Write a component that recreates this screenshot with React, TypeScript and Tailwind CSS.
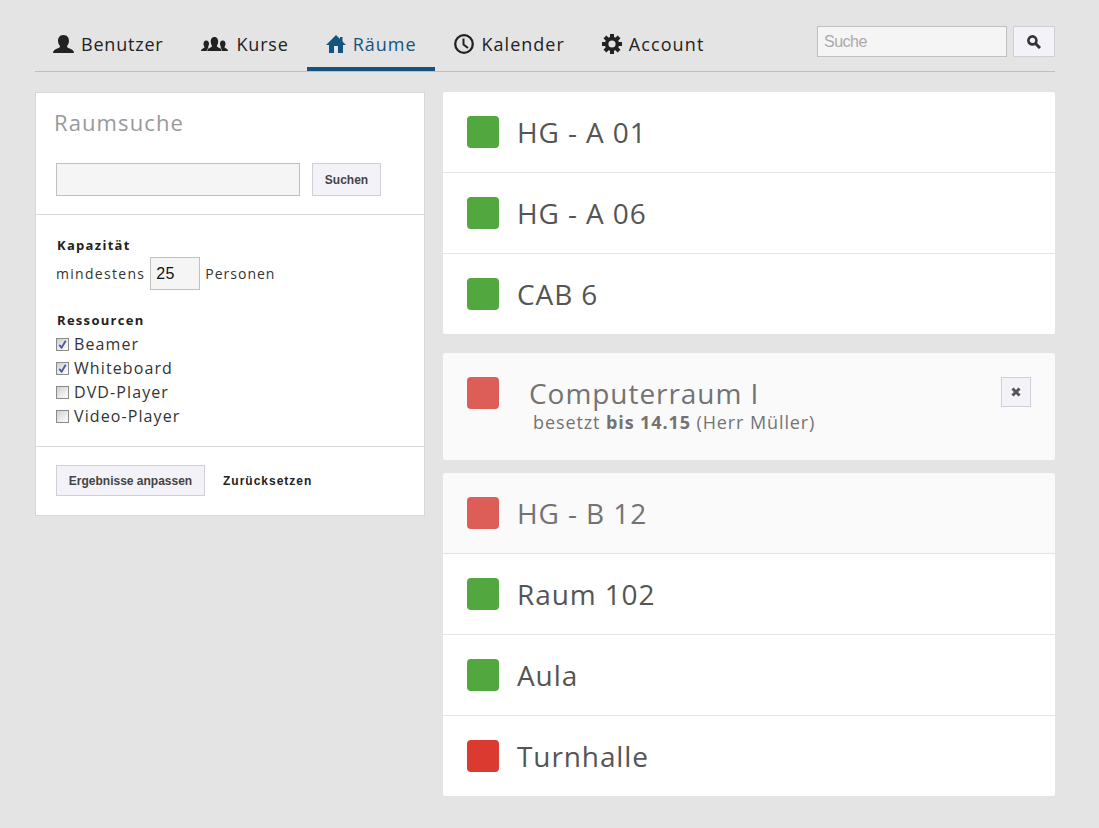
const sans = "font-['Open_Sans',sans-serif]";
const arial = "font-['Liberation_Sans',Arial,sans-serif]";

const bust =
  "M10.5 0C6.5 0 5 3 5 6C5 8.5 6.5 10 7 11.5C7 13 3 13.5 1 15.5C.3 16.2 0 17 0 18H21C21 17 20.7 16.2 20 15.5C18 13.5 14 13 14 11.5C14.5 10 16 8.5 16 6C16 3 14.5 0 10.5 0Z";

function UserIcon() {
  return (
    <svg viewBox="0 0 21 18" className="h-[18px] w-[21px] fill-current">
      <path d={bust} />
    </svg>
  );
}

function GroupIcon() {
  return (
    <svg viewBox="0 0 27 14" className="h-[14px] w-[27px] fill-current">
      <path d={bust} transform="translate(0 3.6) scale(.5 .58)" />
      <path d={bust} transform="translate(16.5 3.6) scale(.5 .58)" />
      <path d={bust} transform="translate(6.3 0) scale(.68 .78)" stroke="#e4e4e4" strokeWidth="1.6" paintOrder="stroke" />
    </svg>
  );
}

function HomeIcon() {
  return (
    <svg viewBox="0 0 20 18" className="h-[18px] w-[20px] fill-current">
      <path d="M10 0L14 4V2H16.5V6.5L20 10H17V18H12V11H8V18H3V10H0Z" />
    </svg>
  );
}

function ClockIcon() {
  return (
    <svg viewBox="0 0 20 20" className="h-[20px] w-[20px]" fill="none" stroke="currentColor">
      <circle cx="10" cy="10" r="8.8" strokeWidth="2.3" />
      <path d="M9.5 4.5V10.5L14 14" strokeWidth="2" />
    </svg>
  );
}

function CogIcon() {
  const teeth = [0, 45, 90, 135, 180, 225, 270, 315];
  return (
    <svg viewBox="0 0 20 20" className="h-[20px] w-[20px] fill-current">
      {teeth.map((a) => (
        <rect key={a} x="8" y="0" width="4" height="5" transform={`rotate(${a} 10 10)`} />
      ))}
      <circle cx="10" cy="10" r="5.4" fill="none" stroke="currentColor" strokeWidth="3.6" />
    </svg>
  );
}

function SearchIcon() {
  return (
    <svg viewBox="0 0 14 14" className="h-[14px] w-[14px]" fill="none" stroke="#333">
      <circle cx="5.4" cy="5.4" r="4" strokeWidth="2.6" />
      <path d="M8.5 8.5L13 13" strokeWidth="3" />
    </svg>
  );
}

function CloseIcon() {
  return (
    <svg viewBox="0 0 10 10" className="h-[10px] w-[10px]" fill="none" stroke="#555" strokeWidth="3">
      <path d="M1.5 1.5L8.5 8.5M8.5 1.5L1.5 8.5" />
    </svg>
  );
}

function Tab({
  icon,
  label,
  iconBox,
  spacing,
  active,
}: {
  icon: React.ReactNode;
  label: string;
  iconBox: string;
  spacing: string;
  active?: boolean;
}) {
  return (
    <a
      className={`flex h-[39px] items-start border-b-4 pl-[19px] pr-[18px] text-[18px] leading-[24px] ${spacing} ${
        active ? "border-[#15537f] text-[#15537f]" : "border-transparent text-[#222]"
      }`}
    >
      <span className={`flex h-[24px] items-center ${iconBox}`}>{icon}</span>
      {label}
    </a>
  );
}

function Dot({ color }: { color: string }) {
  return <span className={`h-[32px] w-[32px] shrink-0 rounded-[4px] ${color}`} />;
}

function Room({ name, color, busy, last }: { name: string; color: string; busy?: boolean; last?: boolean }) {
  return (
    <div
      className={`flex items-start gap-[18px] px-[24px] pt-[24px] ${
        last ? "h-[80px]" : "h-[81px] border-b border-[#e4e4e4]"
      } ${busy ? "bg-[#fafafa] text-[#737373]" : "bg-white text-[#555]"}`}
    >
      <Dot color={color} />
      <span className="text-[28px] leading-[32px] tracking-[0.9px]">{name}</span>
    </div>
  );
}

function Check({ label, checked }: { label: string; checked?: boolean }) {
  return (
    <label className="flex h-[24px] items-center gap-[5px] text-[16px] tracking-[1.1px] text-[#333]">
      <span className="flex h-[13px] w-[13px] items-center justify-center border border-[#8a8a8a] bg-gradient-to-br from-[#d0d0d0] to-white">
        {checked && (
          <svg viewBox="0 0 12 12" className="h-[11px] w-[11px]">
            <path d="M2.5 6.5 L5 9.5 L9.5 2" fill="none" stroke="#4a5a9a" strokeWidth="2" />
          </svg>
        )}
      </span>
      {label}
    </label>
  );
}

const btn = `border border-[#cfcfd6] bg-[#f3f2f8] text-[#444] font-bold ${arial}`;
const field = "border border-[#c0c0c0] bg-[#f5f5f5]";
const sectionTitle = "pl-px text-[13px] font-bold leading-[18px] tracking-[1.3px] text-[#222]";

export default function App() {
  return (
    <div className={`min-h-[828px] bg-[#e4e4e4] pl-[35px] pr-[44px] pt-[26px] ${sans}`}>
      {/* Navigation */}
      <nav className="flex h-[46px] items-start justify-between border-b border-[#bfbfbf]">
        <div className="-ml-px flex items-start pt-[6px]">
          <Tab icon={<UserIcon />} label="Benutzer" iconBox="w-[28px]" spacing="tracking-[0.8px]" />
          <Tab icon={<GroupIcon />} label="Kurse" iconBox="w-[36px]" spacing="tracking-[0.8px]" />
          <Tab icon={<HomeIcon />} label="Räume" iconBox="w-[27px]" spacing="tracking-[1px]" active />
          <Tab icon={<ClockIcon />} label="Kalender" iconBox="w-[28px]" spacing="tracking-[1px]" />
          <Tab icon={<CogIcon />} label="Account" iconBox="w-[27px]" spacing="tracking-[1.1px]" />
        </div>
        <div className="flex gap-[6px]">
          <input
            placeholder="Suche"
            className={`h-[31px] w-[190px] px-[6px] text-[16px] tracking-[-0.5px] outline-none placeholder:text-[#aaa] ${field} ${arial}`}
          />
          <button className={`flex h-[31px] w-[42px] items-center justify-center ${btn}`}>
            <SearchIcon />
          </button>
        </div>
      </nav>

      <div className="mt-[20px] flex items-start gap-[18px]">
        {/* Raumsuche */}
        <aside className="h-[424px] w-[390px] shrink-0 border border-[#d8d8d8] bg-white">
          <div className="h-[122px] border-b border-[#d8d8d8] px-[20px]">
            <h2 className="-ml-[2px] pt-[14px] text-[22px] leading-[30px] tracking-[1.1px] text-[#999]">Raumsuche</h2>
            <div className="mt-[26px] flex gap-[12px]">
              <input className={`h-[33px] w-[244px] ${field}`} />
              <button className={`h-[33px] w-[69px] text-[12px] ${btn}`}>Suchen</button>
            </div>
          </div>
          <div className="h-[232px] border-b border-[#d8d8d8] px-[20px] pt-[21px]">
            <div className={sectionTitle}>Kapazität</div>
            <div className="mt-[3px] flex items-center gap-[5px] text-[14px] tracking-[1px] text-[#333]">
              <span className="tracking-[1.3px]">mindestens</span>
              <input
                defaultValue="25"
                className={`h-[33px] w-[50px] px-[5px] text-[16px] tracking-[0.3px] text-[#111] ${field} ${arial}`}
              />
              Personen
            </div>
            <div className={`mt-[21px] ${sectionTitle}`}>Ressourcen</div>
            <div className="mt-[3px]">
              <Check label="Beamer" checked />
              <Check label="Whiteboard" checked />
              <Check label="DVD-Player" />
              <Check label="Video-Player" />
            </div>
          </div>
          <div className="flex items-center gap-[18px] px-[20px] pt-[18px]">
            <button className={`h-[31px] w-[149px] text-[12px] ${btn}`}>Ergebnisse anpassen</button>
            <a className={`text-[12px] font-bold tracking-[1px] text-[#222] ${arial}`}>Zurücksetzen</a>
          </div>
        </aside>

        {/* Raumliste */}
        <main className="flex min-w-0 flex-1 flex-col">
          <section className="overflow-hidden rounded-[2px]">
            <Room name="HG - A 01" color="bg-[#52a83f]" />
            <Room name="HG - A 06" color="bg-[#52a83f]" />
            <Room name="CAB 6" color="bg-[#52a83f]" last />
          </section>
          <section className="mt-[19px] flex h-[107px] items-start rounded-[2px] bg-[#fafafa] px-[24px] pt-[24px] text-[#737373]">
            <Dot color="bg-[#dc5e56]" />
            <div className="ml-[30px] flex-1">
              <div className="mb-px text-[28px] leading-[32px] tracking-[0.95px]">Computerraum I</div>
              <div className="ml-[4px] text-[18px] leading-[24px] tracking-[0.9px]">
                besetzt <b>bis 14.15</b> (Herr Müller)
              </div>
            </div>
            <button className={`flex h-[30px] w-[30px] items-center justify-center ${btn}`}>
              <CloseIcon />
            </button>
          </section>
          <section className="mt-[13px] overflow-hidden rounded-[2px]">
            <Room name="HG - B 12" color="bg-[#dc5e56]" busy />
            <Room name="Raum 102" color="bg-[#52a83f]" />
            <Room name="Aula" color="bg-[#52a83f]" />
            <Room name="Turnhalle" color="bg-[#da3a30]" last />
          </section>
        </main>
      </div>
    </div>
  );
}
